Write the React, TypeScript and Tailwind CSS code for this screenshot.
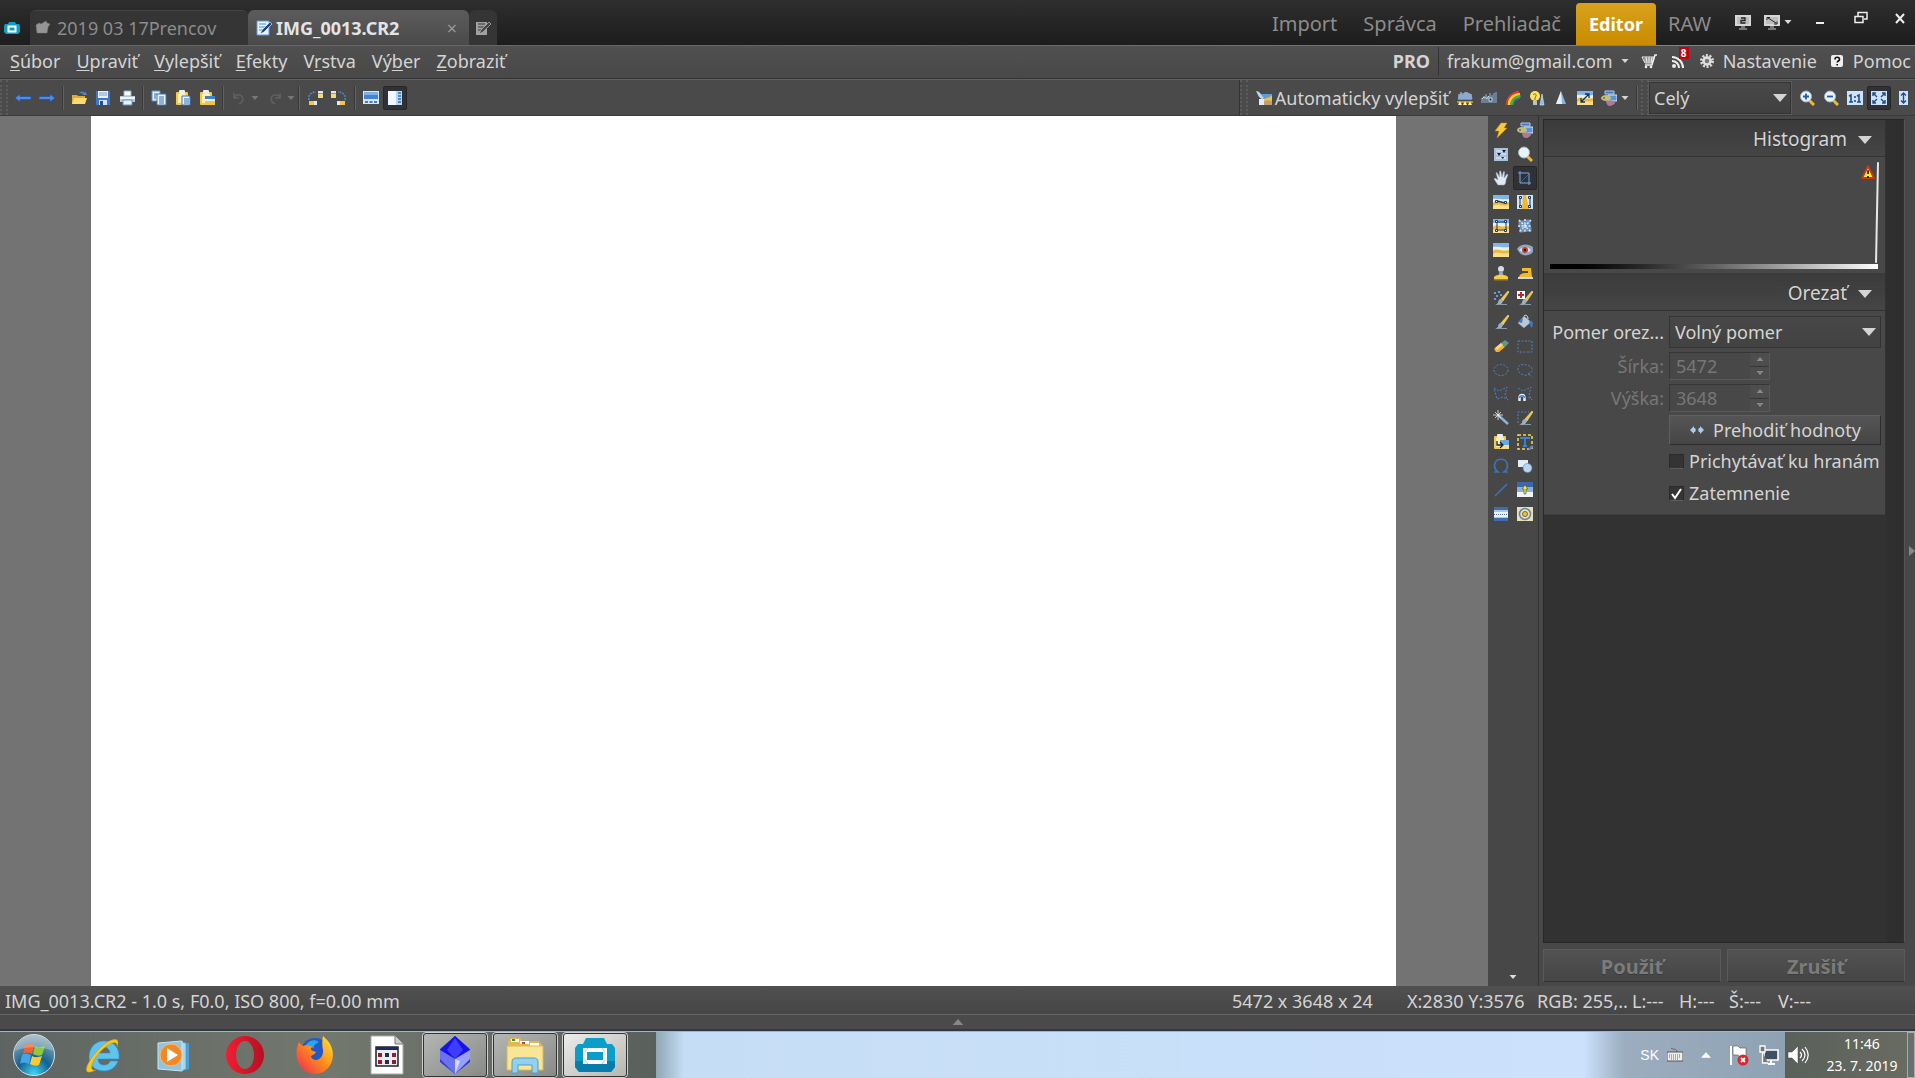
import React, { useState } from "react";
import clsx from "clsx";

// ─── Small 16x16 icons ────────────────────────────────────────────────────────

const monitor = (
  <>
    <rect x="0" y="1" width="16" height="11" fill="#d6d6d6" />
    <rect x="2" y="3" width="12" height="7" fill="#bdbdbd" />
    <path d="M6 12h4v2h2v2H4v-2h2z" fill="#777" />
  </>
);

const brush = (
  <>
    <path d="M15 1 8 9l2 2 6-9z" fill="#f4c83a" stroke="#fff0a0" strokeWidth=".5" />
    <path d="M8 9c-2 0-3 2-3 4-1 1-2 1-3 1 3 2 7 1 8-3z" fill="#9bb0c0" />
    <path d="M7 14h7v1H5z" fill="#8c98a2" />
  </>
);

const clipboard = (
  <>
    <rect x="1" y="2" width="12" height="13" rx="1" fill="#f6c945" />
    <rect x="3" y="4" width="8" height="9" fill="#fdf0b4" />
    <rect x="4" y="0" width="6" height="4" rx="1" fill="#e9eef4" />
  </>
);

const lens = (
  <>
    <path d="m10 10 5 5" stroke="#f0b92c" strokeWidth="3" />
    <circle cx="7" cy="6.500" r="5.500" fill="#e9f2fb" stroke="#9fb3c6" />
  </>
);

const scene = (
  <>
    <rect x="0" y="1" width="16" height="14" fill="#7fb4e8" />
    <path d="M0 5c5-1 10 1 16 0v4H0z" fill="#e4f0fb" />
    <path d="M0 9c4-4 7 1 16-1v7H0z" fill="#f0b840" />
    <path d="M0 12c5-3 9 1 16-1v4H0z" fill="#fbe08c" />
  </>
);

const photos = (
  <>
    <path d="M4 1h9v3H4z" fill="#3e78c8" stroke="#a9cdf3" />
    <path d="M7 5h9v6H7z" fill="#5d94d8" stroke="#d4e6fa" />
    <ellipse cx="5" cy="8" rx="5" ry="3" fill="#b8c47a" />
    <circle cx="3" cy="8" r="1" fill="#c9453c" />
    <path d="M5 11c4-1 8 0 9 1s-3 4-5 4-4-2-4-5z" fill="#b07a94" />
  </>
);

const icons = {
  app: (
    <>
      <path d="M5 2h6l1 2h3l1 2v6l-2 2H2l-2-2V6l1-2h3z" fill="#0aa0c6" />
      <path d="M4.500 6.500h7v5h-7z" fill="none" stroke="#fff" strokeWidth="2" />
    </>
  ),
  folderGray: (
    <path d="M1 5 4 3l2 1 5-3 1 2 3 1-2 3-1 6H2z" fill="#969696" stroke="#7a7a7a" strokeWidth=".5" />
  ),
  editBlue: (
    <>
      <path d="M1 1h12v14H1z" fill="#eaf3fd" stroke="#5e9bdc" />
      <path d="M3 4h7M3 7h7M3 10h5" stroke="#7cb0e8" strokeWidth="1.500" />
      <path d="m14 2 2 2-8 8-4 2 2-4z" fill="#17457e" stroke="#fff" strokeWidth=".6" />
    </>
  ),
  editGray: (
    <>
      <path d="M1 2h11v13H1z" fill="#a0a0a0" />
      <path d="M3 4h7M3 7h7M3 10h5" stroke="#5a5a5a" strokeWidth="1.500" />
      <path d="m14 2 2 2-8 8-4 2 2-4z" fill="#444" stroke="#b5b5b5" strokeWidth=".7" />
    </>
  ),
  display2: (
    <>
      {monitor}
      <path d="M6 4h4v2.500H6V9h4.500" fill="none" stroke="#222" strokeWidth="1.300" />
    </>
  ),
  fullscreen: (
    <>
      {monitor}
      <path d="m4 4 8 5M3 6V3.500h3M10 10h3V7.500" stroke="#222" fill="none" />
    </>
  ),
  minimize: <path d="M4 12h8v2H4z" fill="#eee" />,
  restore: (
    <>
      <path d="M6 6V2.500h9V9h-3" fill="none" stroke="#eee" strokeWidth="1.500" />
      <path d="M3 6.500h8v6H3z" fill="none" stroke="#eee" strokeWidth="1.500" />
    </>
  ),
  close: <path d="m4 4 8 9m0-9-8 9" stroke="#eee" strokeWidth="2" />,
  cart: (
    <>
      <path d="M1 4h12l-2 6H4z" fill="none" stroke="#eee" />
      <path d="M3 6h9M3 8h8M5 4l1 6m2-6v6m3-6-1 6" stroke="#eee" />
      <path d="M16 2h-2l-3 10H4" fill="none" stroke="#eee" strokeWidth="1.500" />
      <circle cx="5" cy="14" r="1.300" fill="#eee" />
      <circle cx="10" cy="14" r="1.300" fill="#eee" />
    </>
  ),
  rss: (
    <>
      <circle cx="3" cy="13" r="2" fill="#eee" />
      <path d="M1 8a7 7 0 0 1 7 7M1 4a11 11 0 0 1 11 11" fill="none" stroke="#eee" strokeWidth="2" />
    </>
  ),
  gear: (
    <>
      <circle cx="8" cy="8" r="5.500" fill="none" stroke="#d8d8d8" strokeWidth="3" strokeDasharray="2 1.450" />
      <circle cx="8" cy="8" r="3.500" fill="#777" stroke="#e0e0e0" strokeWidth="2.500" />
    </>
  ),
  help: (
    <>
      <rect x="2" y="2" width="12" height="12" rx="2" fill="#eee" />
      <path d="M6 6.500c0-3 4.500-3 4.500 0 0 1.500-2.300 1.500-2.300 3M8.200 11v1.500" fill="none" stroke="#111" strokeWidth="1.600" />
    </>
  ),
  back: <path d="m0 8 5-4v2.500h11v3H5V12z" fill="#4d8ce8" stroke="#1c4c9c" strokeWidth=".6" />,
  forward: <path d="m16 8-5-4v2.500H0v3h11V12z" fill="#4d8ce8" stroke="#1c4c9c" strokeWidth=".6" />,
  open: (
    <>
      <path d="M1 5h5l1 1h7v8H1z" fill="#e8a927" />
      <path d="M3 8h13l-2 6H1z" fill="#fbdc74" />
      <path d="M8 3c2-2 4-2 6 0V1l2 4h-5l2-1c-2-1-3-1-5-1z" fill="#4c8ad4" />
    </>
  ),
  save: (
    <>
      <path d="M1 1h14v14H1z" fill="#3a78c8" />
      <path d="M3 1h10v7H3z" fill="#e6f0fa" />
      <path d="M4 3h8M4 5h8" stroke="#7aa5d8" />
      <path d="M4 10h8v5H4z" fill="#d6e2ee" />
      <path d="M5 11h3v4H5z" fill="#23508c" />
    </>
  ),
  print: (
    <>
      <path d="M5 1h7v5H5z" fill="#fff" stroke="#86aee0" />
      <path d="M1 6h15v6H1z" fill="#b4c8dc" />
      <path d="M1 8h15" stroke="#eef5fc" strokeWidth="2" />
      <path d="M4 10h9v5H4z" fill="#eaf3fc" stroke="#6a90bc" />
    </>
  ),
  copy: (
    <>
      <path d="M1 1h8v10H1z" fill="#e2effc" stroke="#5c92d0" />
      <path d="M6 4h9v11H6z" fill="#eff6fe" stroke="#3b73b8" />
      <path d="M8 7h5M8 9h5M8 11h5M8 13h5M3 4h3M3 6h2M3 8h2" stroke="#2f6cb4" />
    </>
  ),
  paste: (
    <>
      {clipboard}
      <path d="M7 6h8v9H7z" fill="#eff6fe" stroke="#3b73b8" />
      <path d="M9 9h5M9 11h5M9 13h5" stroke="#2f6cb4" />
    </>
  ),
  pasteImage: (
    <>
      {clipboard}
      <path d="M6 6h10v3H6z" fill="#3f82d0" />
      <path d="M6 9h10v2H6z" fill="#e8f1fa" />
      <path d="M6 11h10v4H6z" fill="#f2c447" />
    </>
  ),
  undo: <path d="M3 3v5h5M3 8c3-6 11-3 8 4l-3 2" fill="none" stroke="#606060" strokeWidth="1.600" />,
  redo: <path d="M13 3v5H8m5 0C10 2 2 5 5 12l3 2" fill="none" stroke="#606060" strokeWidth="1.600" />,
  rotateLeft: (
    <>
      <path d="M2 10C1 5 4 2 9 2" fill="none" stroke="#4a86d0" strokeWidth="1.600" strokeDasharray="2 1" />
      <path d="M11 1h5v7h-5z" fill="#f4d87a" />
      <path d="M11 1h5v2h-5z" fill="#dbeafa" />
      <path d="M11 3h5v1h-5z" fill="#6fa5e2" />
      <path d="M2 11h5v4H2z" fill="#f3c44b" />
      <path d="M7 11h3v4H7z" fill="#dbeafa" />
    </>
  ),
  rotateRight: (
    <>
      <path d="M14 10c1-5-2-8-7-8" fill="none" stroke="#4a86d0" strokeWidth="1.600" strokeDasharray="2 1" />
      <path d="M0 1h5v7H0z" fill="#f4d87a" />
      <path d="M0 1h5v2H0z" fill="#dbeafa" />
      <path d="M0 3h5v1H0z" fill="#6fa5e2" />
      <path d="M9 11h5v4H9z" fill="#f3c44b" />
      <path d="M6 11h3v4H6z" fill="#dbeafa" />
    </>
  ),
  filmstrip: (
    <>
      <path d="M0 1h16v13H0z" fill="#d4e6f8" />
      <path d="M1 2h14v7H1z" fill="#4585d0" />
      <path d="M1 2h14v3H1z" fill="#7db2ea" />
      <path d="M2 11h3v2H2zM6.500 11h3v2h-3zM11 11h3v2h-3z" fill="#4b7cb4" />
    </>
  ),
  sidebar: (
    <>
      <path d="M1 1h14v14H1z" fill="#b9d5f2" />
      <path d="M1 1h8v14H1z" fill="#f0f7fe" />
      <path d="M11 3h3M11 6h3M11 9h3M11 12h3" stroke="#3470b4" strokeWidth="1.500" />
    </>
  ),
  auto: (
    <>
      <path d="M5 4h11v11H5z" fill="#5f9bd8" />
      <path d="M5 12c4-6 7-2 11-7v10H5z" fill="#f5c33a" />
      <path d="M7 12c3-2 6-2 9-1v4H7z" fill="#c0a070" />
      <path d="M0 1c3 0 5 3 6 5l2 2-2 1C3 8 2 5 0 1z" fill="#bdd8f0" />
      <path d="M3 9h5v6H3z" fill="#e4edf6" />
    </>
  ),
  levels: (
    <>
      <path d="M1 9c1-6 3-7 5-4 2-4 5-3 6-1 2-2 3 3 4 5z" fill="#5f84b4" />
      <path d="M2 4v6m2-8v8m2-7v7m2-8v8m2-8v8m2-7v7m2-6v6" stroke="#b7cfe8" />
      <path d="M0 11h16v2H0z" fill="#b8912c" />
      <path d="m1 15 2-4 2 4zm5 0 2-4 2 4zm5 0 2-4 2 4z" fill="#fff2a4" />
    </>
  ),
  curves: (
    <>
      <path d="M1 13V8m2 5V6m2 7V4m2 9V6m2 7V3m2 10V5m2 8V3m2 10V2" stroke="#8fb3dc" />
      <path d="M1 9c3-5 4 3 7-3" fill="none" stroke="#d8e8f8" />
      <path d="M8 8h3v3H8z" fill="#1b2737" stroke="#c0d6ee" />
    </>
  ),
  rainbow: (
    <>
      <path d="M2 15C2 8 7 3 14 2" fill="none" stroke="#e23a30" strokeWidth="2.500" />
      <path d="M4 15c0-6 4-10 11-11" fill="none" stroke="#f6d12e" strokeWidth="2.500" />
      <path d="M6.500 15c0-4 3-8 9-9" fill="none" stroke="#49b042" strokeWidth="2.500" />
      <path d="M8 15c0-3 2-5 7-7" fill="none" stroke="#3a80d8" strokeWidth="1" />
    </>
  ),
  whiteBalance: (
    <>
      <circle cx="6" cy="6" r="5" fill="#fbe36a" />
      <path d="M4 5c1-2 4-1 3 1L6 8v2" fill="none" stroke="#8a6a12" />
      <path d="M4 11h4v4H4z" fill="#b9c2cc" />
      <path d="m13 4 2 11h-4z" fill="#87b9ea" stroke="#e1effc" strokeWidth=".6" />
    </>
  ),
  cone: (
    <>
      <path d="m8 1 5 13H3z" fill="#8ab2dc" />
      <path d="m8 1 1 13H3z" fill="#e3effa" />
    </>
  ),
  resize: (
    <>
      {scene}
      <path d="m4 12 8-8M8 4h4v4M4 8v4h4" fill="none" stroke="#14335e" strokeWidth="1.300" />
    </>
  ),
  photos,
  zoomIn: (
    <>
      {lens}
      <path d="M4 6.500h6M7 3.500v6" stroke="#1f5ba8" strokeWidth="1.800" />
    </>
  ),
  zoomOut: (
    <>
      {lens}
      <path d="M4 6.500h6" stroke="#1f5ba8" strokeWidth="1.800" />
    </>
  ),
  actual: (
    <>
      <path d="M0 1h16v14H0z" fill="#cfe3f7" />
      <path d="m2 6 2-1v7m-2 0h4m4-6 2-1v7m-2 0h4M8 6v2m0 2v2" fill="none" stroke="#1b4e94" strokeWidth="1.600" />
    </>
  ),
  fit: (
    <>
      <path d="M0 1h16v14H0z" fill="#cfe3f7" />
      <path d="M2 6V3h3M2 3l4 4M14 6V3h-3m3 0-4 4M2 10v3h3m-3 0 4-4m8 1v3h-3m3 0-4-4" fill="none" stroke="#1b4e94" strokeWidth="1.400" />
    </>
  ),
  fitHeight: (
    <>
      <path d="M4 1h9v14H4z" fill="#cfe3f7" />
      <path d="M8.500 3v10M6 5.500 8.500 3 11 5.500m-5 5L8.500 13l2.500-2.500" fill="none" stroke="#1b4e94" strokeWidth="1.400" />
    </>
  ),
  bolt: <path d="M8 1h6l-3 5h3L4 16l2-7H2z" fill="#f8ca35" stroke="#c68f18" strokeWidth=".5" />,
  adjust: (
    <>
      <path d="M1 2h14v13H1z" fill="#a9c1da" />
      <path d="M3 5h10M3 8h10M3 12h10" stroke="#e8f1fa" />
      <path d="M9 4h4l-2 3zM4 7h4l-2 3zM8 11h3l-1 2z" fill="#15232f" />
    </>
  ),
  magnifier: lens,
  hand: (
    <path d="M5 15 1 9l1-1 3 2-2-7 1-.5L6.500 7V1h1.300L9 7l1.500-5.500 1.200.3L11 8l3-4 1 .8-2 5c0 3-1 5-2 5.200z" fill="#dfeaf4" stroke="#8ca5bc" strokeWidth=".5" />
  ),
  crop: (
    <>
      <path d="M3 1v12h11M1 3h11v12" fill="none" stroke="#7ea9da" />
      <path d="m4 12 7-7" stroke="#38608c" />
    </>
  ),
  horizon: (
    <>
      {scene}
      <path d="m4 7 8 2" stroke="#163b62" strokeWidth="1.500" />
      <path d="M2.500 6.500h2v2h-2zM11.500 7.500h2v2h-2z" fill="#eee" stroke="#163b62" />
    </>
  ),
  perspective: (
    <>
      <path d="M0 1h16v14H0z" fill="#d3e6f7" />
      <path d="M6 1h3l3 14H5z" fill="#efb833" />
      <path d="M3 4v9M13 4v9" stroke="#163b62" />
      <path d="M2.500 2.500h2v2h-2zM2.500 11.500h2v2h-2zM11.500 2.500h2v2h-2zM11.500 11.500h2v2h-2z" fill="#eee" stroke="#163b62" />
    </>
  ),
  frame: (
    <>
      {scene}
      <path d="M4 4h9v8H4z" fill="none" stroke="#163b62" />
      <path d="M2.500 2.500h2v2h-2zM2.500 11.500h2v2h-2zM11.500 2.500h2v2h-2zM11.500 11.500h2v2h-2z" fill="#eee" stroke="#163b62" />
    </>
  ),
  mesh: (
    <>
      <path d="M2 2c4 2 8-2 12 0-2 4 2 8 0 12-4-2-8 2-12 0 2-4-2-8 0-12z" fill="#6c93bb" />
      <path d="M8 1v14M1 8h14M2 2l12 12M14 2 2 14" stroke="#d9e9f8" strokeDasharray="2 1.500" strokeWidth="1.500" />
    </>
  ),
  scene,
  eye: (
    <>
      <path d="M0 7c4-6 12-5 16-2v5c-3 4-11 5-14 0z" fill="#8ba8c4" />
      <path d="M2 8c3-3 9-4 12 0-3 4-9 3-12 0z" fill="#d9dfe6" />
      <circle cx="8" cy="8" r="3" fill="#c83a34" />
      <circle cx="8" cy="8" r="1.200" fill="#1b1b1b" />
    </>
  ),
  stamp: (
    <>
      <circle cx="8" cy="3" r="3" fill="#d6dde4" />
      <path d="M6.500 5h3l1 5h-5z" fill="#9aa6b2" />
      <path d="M1 11c2-3 12-3 14 0v3H1z" fill="#f4cf44" />
      <path d="M1 13h14v1.500H1z" fill="#a87d18" />
    </>
  ),
  iron: (
    <>
      <path d="M5 2h9l1 9H2c1-3 3-4 7-4h2V5H5z" fill="#f3b92d" />
      <path d="M1 11h15v2H1z" fill="#cfd8e0" />
    </>
  ),
  effectBrush: (
    <>
      {brush}
      <path d="M1 3h2M5 2h2M3 6h2M7 5h2M1 9h2" stroke="#6f9bd0" strokeWidth="2" />
    </>
  ),
  healBrush: (
    <>
      {brush}
      <path d="M0 1h8v8H0z" fill="#fff" />
      <path d="M4 2v6M1 5h6" stroke="#c8202c" strokeWidth="2" />
    </>
  ),
  brush,
  bucket: (
    <>
      <path d="m7 2 7 6-7 6-6-5z" fill="#b9c9da" stroke="#7c92a8" strokeWidth=".5" />
      <path d="M7 2C9 0 11 2 11 5" fill="none" stroke="#dfe8f0" />
      <path d="M12 7c5-1 4 4 3 7-1-1-2-3-3-7zM1 8l5-4-1 5z" fill="#3c7cc4" />
    </>
  ),
  eraser: (
    <>
      <path d="m1 11 7-6 4 4-6 5H3z" fill="#f4ad32" />
      <path d="m8 5 4-3 4 3-4 4z" fill="#5d9a8c" />
      <path d="m2 10 6-5 2 2-6 5z" fill="#fbd77c" />
    </>
  ),
  selectRect: <path d="M1 3h14v11H1z" fill="none" stroke="#4f83c4" strokeDasharray="2 1.500" />,
  selectEllipse: <ellipse cx="8" cy="8" rx="7" ry="5.500" fill="none" stroke="#4f83c4" strokeDasharray="2 1.500" />,
  lasso: <path d="M13 12C8 15 1 12 1 7s5-5 8-4 6 1 6 5-4 3-4 3l4 4" fill="none" stroke="#4f83c4" strokeDasharray="2 1.500" />,
  polygon: <path d="m1 2 5 3 8-4-2 8 3 5-5-3-6 2z" fill="none" stroke="#4f83c4" strokeDasharray="2 1.500" />,
  magnet: (
    <>
      <path d="m1 2 5 3 8-4-2 8 3 5-4-3" fill="none" stroke="#4f83c4" strokeDasharray="2 1.500" />
      <path d="M2.500 15v-3c0-4 5-4 5 0v3" fill="none" stroke="#e3f0fc" strokeWidth="2.500" />
      <path d="M2.500 12c0-3 5-3 5 0" fill="none" stroke="#4a8ad8" strokeWidth="1.500" />
    </>
  ),
  wand: (
    <>
      <path d="m5 5 10 9" stroke="#8fb0ce" strokeWidth="2.500" />
      <path d="M5 0v10M0 5h10M2 2l6 6m0-6L2 8" stroke="#e8eef4" strokeWidth=".8" />
    </>
  ),
  selectBrush: (
    <>
      <path d="M1 13V2h11" fill="none" stroke="#4f83c4" strokeDasharray="2 1.500" />
      {brush}
    </>
  ),
  pasteInto: (
    <>
      {clipboard}
      <path d="M7 6h9v5H7z" fill="#6ba7e4" />
      <path d="M6 11h10v4H6z" fill="#f5dc90" />
      <path d="M4 7v4h5M7 8l3 3-3 3" fill="none" stroke="#182430" strokeWidth="1.300" />
    </>
  ),
  textTool: (
    <>
      <path d="M1 1h14v14H1z" fill="none" stroke="#f6dc52" strokeDasharray="3 2" strokeWidth="1.500" />
      <path d="M4 5V4h8v1M8 4v8m-2 0h4" fill="none" stroke="#3f84d4" strokeWidth="1.800" />
      <path d="m11 15 4-4 1 2-3 3z" fill="#4d8ad0" />
    </>
  ),
  omega: (
    <path d="M1 14h4c-4-3-4-6-3-9 2-5 10-5 12 0 1 3 1 6-3 9h4" fill="none" stroke="#3e74b4" strokeWidth="1.600" />
  ),
  shapes: (
    <>
      <path d="M1 2h10v7H1z" fill="#dfedfa" />
      <circle cx="10.500" cy="10" r="4.500" fill="#b9d4f0" stroke="#5d83ac" strokeWidth=".6" />
    </>
  ),
  line: <path d="M2 14 14 2" stroke="#3e74b4" strokeWidth="1.600" />,
  gradientTool: (
    <>
      <path d="M0 0h16v15H0z" fill="#8fb0da" />
      <path d="M0 0h16v5H0z" fill="#3c68a8" />
      <path d="M0 10h16v5H0z" fill="#eef4fa" />
      <path d="m8 3 3 4H9v5H7V7H5z" fill="#f4e84a" stroke="#4b5020" strokeWidth=".6" />
    </>
  ),
  linear: (
    <>
      <path d="M1 1h14v14H1z" fill="#3f6cac" />
      <path d="M1 4h14v8H1z" fill="#a9c6e6" />
      <path d="M1 6h14v5H1z" fill="#eaf2fb" />
      <path d="M1 8.500h14" stroke="#51708f" strokeDasharray="1 1" />
    </>
  ),
  radial: (
    <>
      <path d="M0 1h16v14H0z" fill="#e9dfb8" />
      <circle cx="8" cy="8" r="5.500" fill="none" stroke="#5e87a8" strokeWidth="1.500" />
      <circle cx="8" cy="8" r="2.500" fill="#f1c13b" stroke="#7a6a32" />
    </>
  ),
  swap: (
    <path d="m1 8 4-4v2h1c1 1 1 3 0 4H5v2zm14 0-4-4v2h-1c-1 1-1 3 0 4h1v2z" fill="#a9cdf0" />
  ),
  keyboard: (
    <>
      <path d="M4 1c2 2 6 0 6 4" fill="none" stroke="#666" />
      <path d="M0 5h16v9H0z" fill="#eee" stroke="#555" />
      <path d="M2 8h12M2 10h12M4 12h8" stroke="#666" strokeDasharray="1 1" />
    </>
  ),
};

type IconName = keyof typeof icons;

function Icon({ name }: { name: IconName }) {
  return (
    <svg viewBox="0 0 16 16" className="size-4 shrink-0" aria-hidden="true">
      {icons[name]}
    </svg>
  );
}

function Caret({ className }: { className?: string }) {
  return (
    <svg viewBox="0 0 14 8" className={clsx("shrink-0", className)} aria-hidden="true">
      <path d="M0 0h14L7 8z" fill="currentColor" />
    </svg>
  );
}

function ToolButton({ name, active }: { name: IconName; active?: boolean }) {
  return (
    <button
      aria-label={name}
      className={clsx("size-6 flex items-center justify-center shrink-0", active && "bg-[#2f3136] border border-[#262626] rounded-xs")}
    >
      <Icon name={name} />
    </button>
  );
}

function Divider() {
  return <div className="w-2 h-6 flex justify-center shrink-0"><div className="w-0.5 bg-[#626262] border-l border-[#3a3a3a]" /></div>;
}

function Grip() {
  return <div className="w-2 self-stretch border-x-2 border-dotted border-[#5c5c5c] shrink-0" />;
}

// ─── Title bar ────────────────────────────────────────────────────────────────

const modules = ["Import", "Správca", "Prehliadač", "Editor", "RAW"];

function TitleBar() {
  return (
    <header>
      <div className="h-[45px] flex items-end bg-linear-to-b from-[#2e2e2e] to-[#1d1d1d] text-[#8c8c8c] text-lg">
        <div className="w-[30px] h-[35px] flex items-center pl-1">
          <Icon name="app" />
        </div>
        <button className="w-[218px] h-[35px] flex items-center gap-1.5 pl-[5px] rounded-t-md bg-[#353535] border-t border-[#444]">
          <Icon name="folderGray" />
          2019 03 17Prencov
        </button>
        <div className="w-[221px] h-[35px] flex items-center gap-1 pl-2 pr-3 rounded-t-md bg-linear-to-b from-[#5c5c5c] to-[#4a4a4a] text-[#e4e4e4] font-bold">
          <Icon name="editBlue" />
          IMG_0013.CR2
          <button aria-label="Zavrieť" className="ml-auto text-[#999] font-normal">×</button>
        </div>
        <button aria-label="Nová karta" className="w-[28px] h-[35px] flex items-center pl-1.5 rounded-t-md bg-[#353535]">
          <Icon name="editGray" />
        </button>

        <nav className="ml-auto h-[42px] flex items-stretch text-xl">
          {modules.map((m) => (
            <button
              key={m}
              className={clsx(
                m === "Editor"
                  ? "w-20 mr-3 rounded-t-sm bg-linear-to-b from-[#d9a21a] to-[#c88a00] text-white text-lg font-bold"
                  : m === "RAW" ? "mr-6" : m === "Prehliadač" ? "mr-[15px]" : "mr-[26px]"
              )}
            >
              {m}
            </button>
          ))}
        </nav>
        <div className="h-[42px] flex items-start pt-[7px] pr-[7px] text-[#ddd]">
          <button aria-label="Druhý monitor" className="pt-1 mr-[13px]"><Icon name="display2" /></button>
          <button aria-label="Celá obrazovka" className="flex items-center gap-1 pt-1 mr-5">
            <Icon name="fullscreen" />
            <Caret className="w-2 h-1" />
          </button>
          <button aria-label="Minimalizovať" className="mr-6"><Icon name="minimize" /></button>
          <button aria-label="Obnoviť" className="mr-6"><Icon name="restore" /></button>
          <button aria-label="Zatvoriť"><Icon name="close" /></button>
        </div>
      </div>
      <div className="h-px bg-linear-to-r from-[#666] via-[#6e6750] to-[#b08a18]" />
    </header>
  );
}

// ─── Menu bar ─────────────────────────────────────────────────────────────────

const menus = [
  ["", "S", "úbor"],
  ["", "U", "praviť"],
  ["", "V", "ylepšiť"],
  ["", "E", "fekty"],
  ["V", "r", "stva"],
  ["Vý", "b", "er"],
  ["", "Z", "obraziť"],
];

function MenuBar() {
  return (
    <div className="h-[33px] flex items-center pl-2.5 pr-1 pb-0.5 bg-linear-to-b from-[#505050] to-[#484848] border-b border-[#333] text-[#d4d4d4] text-lg">
      <nav className="flex gap-4">
        {menus.map(([pre, key, rest]) => (
          <button key={key + rest}>
            {pre}<span className="underline underline-offset-2">{key}</span>{rest}
          </button>
        ))}
      </nav>
      <span className="ml-auto font-bold">PRO</span>
      <div className="w-px h-7 mx-2 bg-[#333]" />
      <button className="flex items-center gap-2 mr-3">
        frakum@gmail.com
        <Caret className="w-2 h-1" />
      </button>
      <button aria-label="Košík" className="mr-[14px]"><Icon name="cart" /></button>
      <button aria-label="Novinky" className="relative mr-3">
        <Icon name="rss" />
        <span className="absolute left-2 -top-1.5 w-2.5 h-3 bg-[#c4000c] text-white text-[10px] leading-3 font-bold text-center">8</span>
      </button>
      <button className="flex items-center gap-2 mr-3"><Icon name="gear" />Nastavenie</button>
      <button className="flex items-center gap-2"><Icon name="help" />Pomoc</button>
    </div>
  );
}

// ─── Toolbar ──────────────────────────────────────────────────────────────────

function Toolbar() {
  return (
    <div className="h-[37px] flex items-center bg-[#4a4a4a] border-t border-[#606060] border-b border-b-[#3a3a3a] text-[#d4d4d4] text-lg">
      <Grip />
      <div className="flex items-center pl-[3px]">
        <ToolButton name="back" />
        <ToolButton name="forward" />
        <Divider />
        <ToolButton name="open" />
        <ToolButton name="save" />
        <ToolButton name="print" />
        <Divider />
        <ToolButton name="copy" />
        <ToolButton name="paste" />
        <ToolButton name="pasteImage" />
        <Divider />
        <ToolButton name="undo" />
        <Caret className="w-2 h-1 mr-1 text-[#777]" />
        <ToolButton name="redo" />
        <Caret className="w-2 h-1 text-[#777]" />
        <Divider />
        <ToolButton name="rotateLeft" />
        <ToolButton name="rotateRight" />
        <Divider />
        <ToolButton name="filmstrip" />
        <ToolButton name="sidebar" active />
      </div>
      <div className="ml-auto flex items-center self-stretch border-l border-[#333]">
        <Grip />
        <button className="flex items-center gap-[3px] pl-2 mr-1"><Icon name="auto" />Automaticky vylepšiť</button>
        <ToolButton name="levels" />
        <ToolButton name="curves" />
        <ToolButton name="rainbow" />
        <ToolButton name="whiteBalance" />
        <ToolButton name="cone" />
        <ToolButton name="resize" />
        <ToolButton name="photos" />
        <Caret className="w-2 h-1 mr-1" />
        <Divider />
        <Grip />
        <div className="relative w-[142px] mr-1">
          <select aria-label="Mierka" className="w-full h-8 pl-1 appearance-none bg-linear-to-b from-[#484848] to-[#404040] border border-[#333] outline outline-[#5a5a5a]">
            <option>Celý</option>
          </select>
          <Caret className="absolute right-1 top-3 w-3.5 h-2 pointer-events-none" />
        </div>
        <ToolButton name="zoomIn" />
        <ToolButton name="zoomOut" />
        <ToolButton name="actual" />
        <ToolButton name="fit" active />
        <ToolButton name="fitHeight" />
      </div>
    </div>
  );
}

// ─── Tool palette ─────────────────────────────────────────────────────────────

const tools: IconName[] = [
  "bolt", "photos",
  "adjust", "magnifier",
  "hand", "crop",
  "horizon", "perspective",
  "frame", "mesh",
  "scene", "eye",
  "stamp", "iron",
  "effectBrush", "healBrush",
  "brush", "bucket",
  "eraser", "selectRect",
  "selectEllipse", "lasso",
  "polygon", "magnet",
  "wand", "selectBrush",
  "pasteInto", "textTool",
  "omega", "shapes",
  "line", "gradientTool",
  "linear", "radial",
];

function Palette() {
  return (
    <div className="w-[51px] flex flex-col items-center pt-0.5 pb-[7px] bg-[#474747] border-r border-[#333] shrink-0">
      <div className="grid grid-cols-2">
        {tools.map((t) => (
          <ToolButton key={t} name={t} active={t === "crop"} />
        ))}
      </div>
      <Caret className="w-2 h-1 mt-auto text-[#ddd]" />
    </div>
  );
}

// ─── Side panel ───────────────────────────────────────────────────────────────

function SectionHeader({ title }: { title: string }) {
  return (
    <button className="w-full h-[37px] flex items-center justify-end gap-2.5 pr-3 pt-1 bg-linear-to-b from-[#3b3b3b] to-[#454545] border-b border-[#333] text-[19px] text-shadow-xs">
      {title}
      <Caret className="w-4 h-2" />
    </button>
  );
}

function SizeField({ id, label, value }: { id: string; label: string; value: string }) {
  return (
    <>
      <label htmlFor={id} className="text-right text-[#777]">{label}</label>
      <div className="w-[101px] h-7 flex border border-[#363636] border-r-[#5a5a5a] border-b-[#5a5a5a]">
        <input id={id} disabled defaultValue={value} className="w-20 pl-1.5 text-[#777]" />
        <div className="flex-1 flex flex-col gap-px bg-[#363636] text-[#888]">
          <button disabled aria-label="Zväčšiť" className="flex-1 flex items-center justify-center bg-[#4d4d4d]"><Caret className="w-2 h-1 rotate-180" /></button>
          <button disabled aria-label="Zmenšiť" className="flex-1 flex items-center justify-center bg-[#4d4d4d]"><Caret className="w-2 h-1" /></button>
        </div>
      </div>
    </>
  );
}

function Check({ label, checked, onChange }: { label: string; checked: boolean; onChange: () => void }) {
  return (
    <label className="h-8 flex items-center gap-[5px] whitespace-nowrap">
      <span className="relative size-[15px] shrink-0">
        <input type="checkbox" checked={checked} onChange={onChange} className="block size-[15px] appearance-none bg-[#343434] border border-[#2b2b2b] border-b-[#5c5c5c]" />
        {checked && (
          <svg viewBox="0 0 15 15" className="absolute inset-0 pointer-events-none">
            <path d="m3 8 3 4 6-9" fill="none" stroke="#fff" strokeWidth="2" />
          </svg>
        )}
      </span>
      {label}
    </label>
  );
}

function SidePanel() {
  const [snap, setSnap] = useState(false);
  const [darken, setDarken] = useState(true);

  return (
    <aside className="w-[376px] flex bg-[#484848] text-[#d4d4d4] text-lg shrink-0">
      <div className="flex-1 flex flex-col pl-1 pt-[3px] pb-1">
        <div className="flex-1 flex bg-[#323232] border border-[#262626] border-r-[#555]">
          <div className="w-[341px]">
            <SectionHeader title="Histogram" />
            <div className="h-[117px] bg-[#484848] px-1.5 pt-[5px] border-b border-[#3a3a3a]">
              <svg viewBox="0 0 330 102" className="w-full h-[102px]">
                <path d="M329 0 327 101" stroke="#e8e8e8" strokeWidth="2" />
                <path d="m319 4 6 12h-12z" fill="#ffe92c" stroke="#c43a12" strokeWidth="2" strokeLinejoin="round" />
                <path d="M319 8v4m0 2v2" stroke="#000" strokeWidth="1.500" />
              </svg>
              <div className="h-[5px] mr-px bg-linear-to-r from-black to-white" />
            </div>
            <SectionHeader title="Orezať" />
            <div className="h-[204px] grid grid-cols-[120px_1fr] gap-x-[5px] gap-y-1 content-start items-center pt-[5px] pr-1 bg-[#484848] border-b border-[#3e3e3e]">
              <label htmlFor="ratio" className="text-right whitespace-nowrap">Pomer orez...</label>
              <div className="relative">
                <select id="ratio" className="w-full h-8 pl-[5px] appearance-none bg-linear-to-b from-[#484848] to-[#424242] border border-[#333]">
                  <option>Volný pomer</option>
                </select>
                <Caret className="absolute right-[5px] top-3 w-3.5 h-2 pointer-events-none" />
              </div>
              <SizeField id="width" label="Šírka:" value="5472" />
              <SizeField id="height" label="Výška:" value="3648" />
              <div className="col-start-2 flex flex-col -mt-px">
                <button className="h-[30px] flex items-center justify-center gap-2 bg-linear-to-b from-[#555] to-[#464646] border border-[#606060] border-b-[#2c2c2c] border-r-[#2c2c2c]">
                  <Icon name="swap" />
                  Prehodiť hodnoty
                </button>
                <Check label="Prichytávať ku hranám" checked={snap} onChange={() => setSnap(!snap)} />
                <Check label="Zatemnenie" checked={darken} onChange={() => setDarken(!darken)} />
              </div>
            </div>
          </div>
          <div className="flex-1 bg-[#2f2f2f] mx-px" />
        </div>
        <div className="grid grid-cols-2 gap-1.5 pt-1.5 text-xl font-bold text-[#7b7b7b]">
          {["Použiť", "Zrušiť"].map((label) => (
            <button key={label} disabled className="h-[33px] pt-0.5 bg-linear-to-b from-[#525252] to-[#464646] border border-[#5a5a5a] border-b-[#333] text-shadow-xs">
              {label}
            </button>
          ))}
        </div>
      </div>
      <button aria-label="Skryť panel" className="w-2.5 flex items-center justify-end">
        <svg viewBox="0 0 6 10" className="w-1.5 h-2.5">
          <path d="m0 0 6 5-6 5z" fill="#888" />
        </svg>
      </button>
    </aside>
  );
}

// ─── Status bar ───────────────────────────────────────────────────────────────

function StatusBar() {
  return (
    <>
      <div className="h-[29px] flex items-center pl-[5px] pt-0.5 bg-linear-to-b from-[#505050] to-[#464646] border-b border-[#666] text-[#d4d4d4] text-lg whitespace-pre">
        <span className="flex-1">IMG_0013.CR2 - 1.0 s, F0.0, ISO 800, f=0.00 mm</span>
        <span className="w-[175px]">5472 x 3648 x 24</span>
        <span className="w-[130px]">X:2830 Y:3576</span>
        <span className="w-[95px]">RGB: 255,..</span>
        <span className="w-[47px]">L:---</span>
        <span className="w-[50px]">H:---</span>
        <span className="w-[49px]">Š:---</span>
        <span className="w-[137px]">V:---</span>
      </div>
      <button aria-label="Zobraziť panel" className="h-4 flex items-center justify-center bg-[#4a4a4a] border-b-2 border-[#303a44]">
        <Caret className="w-3 h-1.5 rotate-180 text-[#888]" />
      </button>
    </>
  );
}

// ─── Windows taskbar ──────────────────────────────────────────────────────────

function StartOrb() {
  return (
    <svg viewBox="0 0 44 44" className="size-11">
      <defs>
        <radialGradient id="orb" cx=".5" cy=".95" r=".9">
          <stop offset="0" stopColor="#3fd4f8" />
          <stop offset=".45" stopColor="#12628e" />
          <stop offset="1" stopColor="#8da9b8" />
        </radialGradient>
      </defs>
      <circle cx="22" cy="22" r="20.500" fill="url(#orb)" stroke="#d1e0e8" />
      <path d="M13 12c4-2 6-1 9 0l-2 9c-3-1-5-2-9 0z" fill="#ee6330" />
      <path d="M23 13c4 2 6 1 10 0l-3 9c-3 1-5 1-9-1z" fill="#92c83e" />
      <path d="M10 22c4-2 6-1 9 0l-2 9c-3-1-5-2-9 0z" fill="#46a5e8" />
      <path d="M20 23c4 2 6 1 10 0l-3 9c-3 1-5 1-9-1z" fill="#fbc931" />
      <path d="M3 18C5 6 15 2 22 2s17 4 19 16c-12-5-26-5-38 0z" fill="#fff" opacity=".25" />
    </svg>
  );
}

function ExplorerLogo() {
  return (
    <svg viewBox="0 0 40 40" className="size-10">
      <path d="M21 6C11 6 6 14 6 22s6 14 15 14c7 0 12-4 14-10h-8c-1 3-3 4-6 4-4 0-6-3-6-6h21C37 13 31 6 21 6zm-6 12c0-3 3-6 6-6s6 3 6 6z" fill="#5ec4ee" fillRule="evenodd" stroke="#2c91c8" strokeWidth=".6" />
      <path d="M34 12c5-12-8-9-19 3C3 28-3 43 13 35 5 37 9 25 18 16 26 8 35 4 34 12z" fill="#f7c727" stroke="#b98d12" strokeWidth=".5" />
    </svg>
  );
}

function MediaPlayer() {
  return (
    <svg viewBox="0 0 40 40" className="size-10">
      <path d="m29 9 6-1v26l-6 2z" fill="#4e9fcd" />
      <path d="m27 7 5 1v26l-5 2z" fill="#a3d8f1" stroke="#4d94bc" strokeWidth=".6" />
      <path d="m4 8 24-2v30L4 34z" fill="#93c4df" stroke="#c7e5f4" />
      <circle cx="17" cy="20" r="11" fill="#f18926" stroke="#fbbd74" />
      <path d="m13 13 11 7-11 7z" fill="#fff" />
    </svg>
  );
}

function Opera() {
  return (
    <svg viewBox="0 0 40 40" className="size-10">
      <defs>
        <linearGradient id="opera" x1="0" y1="0" x2="1" y2="0">
          <stop offset="0" stopColor="#f41d32" />
          <stop offset="1" stopColor="#b51020" />
        </linearGradient>
      </defs>
      <path d="M20 1a19 19 0 1 0 0 38 19 19 0 1 0 0-38zm0 5c5 0 9 6 9 14s-4 14-9 14-9-6-9-14 4-14 9-14z" fill="url(#opera)" fillRule="evenodd" />
    </svg>
  );
}

function Firefox() {
  return (
    <svg viewBox="0 0 40 40" className="size-10">
      <defs>
        <linearGradient id="fox" x1="1" y1="0" x2="0" y2="1">
          <stop offset="0" stopColor="#ffe83c" />
          <stop offset=".45" stopColor="#ff9418" />
          <stop offset="1" stopColor="#ee2158" />
        </linearGradient>
      </defs>
      <circle cx="19" cy="17" r="14" fill="#2458c5" />
      <path d="M3 7c1 2 3 3 4 4 4-2 8-1 11 1-4 0-4 3-1 4l3 1c-1 3-5 3-5 5 5 7 13 1 12-7-1-5-1-10 0-14 3 3 6 5 8 10 6 14-3 27-15 28C4 39-4 22 3 7z" fill="url(#fox)" />
      <path d="M10 10c3-5 9-6 13-3-4 2-6 4-5 7-2-3-5-4-8-4z" fill="#2ba5ee" />
    </svg>
  );
}

function CalcFile() {
  return (
    <svg viewBox="0 0 40 40" className="size-10">
      <path d="M4 1h24l8 8v30H4z" fill="#fff" stroke="#aaa" />
      <path d="M28 1v8h8" fill="#ccc" stroke="#777" />
      <path d="M9 12h22v19H9z" fill="#eee" stroke="#222" strokeWidth="1.500" />
      <path d="M9 12h22v3H9z" fill="#1a2872" />
      <path d="M13 18v4m0 3v4M27 18v4m0 3v4" stroke="#8e1d3a" strokeWidth="4" />
      <path d="M20 18v4m0 3v4" stroke="#20304a" strokeWidth="4" />
    </svg>
  );
}

function Gem() {
  return (
    <svg viewBox="0 0 40 40" className="size-10">
      <path d="m20 1 15 13v13L20 39 5 27V14z" fill="#3038dc" />
      <path d="m20 1 15 14-15 9L5 15z" fill="#1712e8" />
      <path d="m20 3 8 12-8 9-8-9z" fill="#3d3cff" />
      <path d="m5 15 15 9v15L5 24z" fill="#6b72ee" />
      <path d="m35 15-15 9v15l15-15z" fill="#9aa0f6" />
      <path d="m20 24 5 2-5 13z" fill="#d5d8ff" />
    </svg>
  );
}

function Folders() {
  return (
    <svg viewBox="0 0 40 40" className="size-10">
      <path d="M3 7 5 3h10l2 3h17l3 4v24H3z" fill="#e3b94d" />
      <path d="M6 4h8v3H6zM15 6h9v3h-9zM25 8h9v3h-9z" fill="#fff" />
      <path d="M7 4h3v2H7z" fill="#2c9a48" />
      <path d="M17 7h3v2h-3z" fill="#d14236" />
      <path d="M2 11h36v24H2z" fill="#f9e695" stroke="#dcb65a" />
      <path d="M7 38V27c0-3 2-4 4-4h18c2 0 4 1 4 4v11h-6v-8H13v8z" fill="#93d0ed" stroke="#4e9fc8" />
    </svg>
  );
}

function Zoner() {
  return (
    <svg viewBox="0 0 40 40" className="size-10">
      <path d="M11 3h18l3 6h5l3 4v19l-4 5H4l-4-5V13l3-4h5z" fill="#0b9ec9" />
      <path d="M0 26h40v6l-4 5H4l-4-5z" fill="#087cab" />
      <path d="M10 15h20v12H10z" fill="none" stroke="#fff" strokeWidth="4" />
      <path d="m27 13 3 4m-20 8 3 4m14 0 3-4M10 17l3-4" stroke="#9cd4e6" />
    </svg>
  );
}

const pinned = [
  { label: "Internet Explorer", logo: <ExplorerLogo /> },
  { label: "Media Player", logo: <MediaPlayer /> },
  { label: "Opera", logo: <Opera /> },
  { label: "Firefox", logo: <Firefox /> },
  { label: "Kalkulačka", logo: <CalcFile /> },
];

const running = [
  { label: "Gem", logo: <Gem /> },
  { label: "Prieskumník", logo: <Folders /> },
  { label: "Zoner", logo: <Zoner />, current: true },
];

function Taskbar() {
  return (
    <footer className="h-[47px] flex items-center bg-[#68706a] border-t border-[#a9b4b8] text-white">
      <div className="flex items-center self-stretch pr-7 bg-linear-to-r from-[#5e6462] via-[#73786e] to-[#59605c]">
        <button aria-label="Štart" className="w-[67px] flex justify-center"><StartOrb /></button>
        {pinned.map((p) => (
          <button key={p.label} aria-label={p.label} className="w-[71px] flex justify-center">{p.logo}</button>
        ))}
        <div className="flex gap-1 self-stretch">
          {running.map((p) => (
            <button
              key={p.label}
              aria-label={p.label}
              className={clsx(
                "w-[66px] flex items-center justify-center rounded-sm border border-[#d0d0d0] outline outline-[#333] -outline-offset-2",
                p.current ? "bg-linear-to-br from-[#eee] to-[#b5b5b0]" : "bg-linear-to-br from-[#b5b7b4] to-[#878a85]"
              )}
            >
              {p.logo}
            </button>
          ))}
        </div>
      </div>
      <div className="flex-1 self-stretch bg-linear-to-r from-[#8fa6b4] via-[#c6def5] via-3% to-[#cbe1fc]" />
      <div className="flex items-center self-stretch pl-14 pr-1.5 bg-linear-to-r from-[#cbe1fc] via-[#9badbf] via-20% to-[#8fa2b3]">
        <button className="mr-2 font-['Liberation_Sans'] text-sm">SK</button>
        <button aria-label="Klávesnica" className="mr-[18px]"><Icon name="keyboard" /></button>
        <button aria-label="Skryté ikony" className="mr-[18px]"><Caret className="w-2.5 h-1.5 rotate-180" /></button>
        <svg viewBox="0 0 20 22" className="w-5 h-[22px] mr-[10px]">
          <path d="M2 2v19" stroke="#fff" strokeWidth="2" />
          <path d="M4 2h5l2 2h6v9h-6l-2-2H4z" fill="#fff" stroke="#555" strokeWidth=".6" />
          <circle cx="14" cy="16" r="5.500" fill="#d9262f" />
          <path d="m12 14 4 4m0-4-4 4" stroke="#fff" strokeWidth="1.800" />
        </svg>
        <svg viewBox="0 0 20 22" className="w-5 h-[22px]">
          <path d="M5 6h14v10H5z" fill="#3c5162" stroke="#fff" strokeWidth="1.600" />
          <path d="M9 20h7M12 16v4" stroke="#fff" strokeWidth="2" />
          <path d="M1 2h5v6H1zM3.500 8v11H9" fill="#777" stroke="#fff" strokeWidth="1.300" />
        </svg>
      </div>
      <div className="flex items-center self-stretch pl-0.5 bg-linear-to-r from-[#59605a] to-[#6a6c62]">
        <svg viewBox="0 0 22 22" className="w-[22px] h-[22px] mr-4">
          <path d="M1 8h4l6-6v18l-6-6H1z" fill="#fff" stroke="#444" strokeWidth=".5" />
          <path d="M13 8c2 2 2 4 0 6m2-9c4 4 4 8 0 12m3-14c4 5 4 11 0 16" fill="none" stroke="#fff" strokeWidth="1.200" />
        </svg>
        <button className="w-[74px] mr-2 text-sm leading-[22px] text-center">
          11:46
          <br />
          23. 7. 2019
        </button>
        <button aria-label="Zobraziť pracovnú plochu" className="w-2 self-stretch bg-[#68706e] border border-[#aaa]" />
      </div>
    </footer>
  );
}

export default function App() {
  return (
    <div className="min-h-screen flex flex-col bg-[#484848] font-['Noto_Sans',sans-serif] select-none">
      <TitleBar />
      <MenuBar />
      <Toolbar />
      <main className="flex-1 flex">
        <div className="flex-1 flex bg-[#737373] pl-[91px] pr-[92px]">
          <div className="flex-1 bg-white" />
        </div>
        <Palette />
        <SidePanel />
      </main>
      <StatusBar />
      <Taskbar />
    </div>
  );
}
